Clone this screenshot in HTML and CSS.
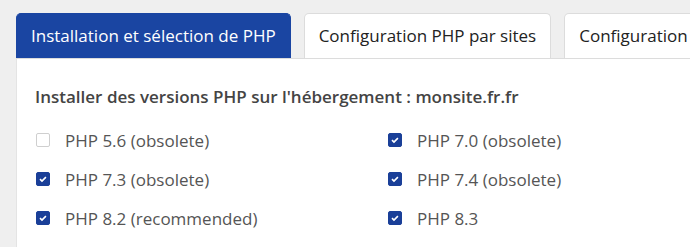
FILE: index.html
```html
<!DOCTYPE html>
<html lang="fr">
<head>
    <meta charset="UTF-8">
    <meta name="viewport" content="width=device-width, initial-scale=1.0">
    <title>PHP</title>
    <link rel="stylesheet" href="styles.css">
</head>
<body>
    <nav class="tabs">
        <div class="tab active">Installation et sélection de PHP</div>
        <div class="tab">Configuration PHP par sites</div>
        <div class="tab">Configuration</div>
    </nav>

    <section class="panel">
        <h2>Installer des versions PHP sur l'hébergement : monsite.fr.fr</h2>
        <div class="versions">
            <label class="version"><span class="box"></span>PHP 5.6 (obsolete)</label>
            <label class="version"><span class="box checked"></span>PHP 7.0 (obsolete)</label>
            <label class="version"><span class="box checked"></span>PHP 7.3 (obsolete)</label>
            <label class="version"><span class="box checked"></span>PHP 7.4 (obsolete)</label>
            <label class="version"><span class="box checked"></span>PHP 8.2 (recommended)</label>
            <label class="version"><span class="box checked"></span>PHP 8.3</label>
        </div>
    </section>
</body>
</html>
```

FILE: styles.css
```css
body {
    margin: 0;
    background-color: #efefef;
    font-family: 'Open Sans', sans-serif;
    color: #444;
    overflow: hidden;
}
.tabs {
    display: flex;
    gap: 13px;
    padding: 13px 0 0 16px;
    white-space: nowrap;
}
.tab {
    flex-shrink: 0;
    height: 45px;
    box-sizing: border-box;
    padding: 0 14px;
    line-height: 44px;
    font-size: 17px;
    color: #222;
    background-color: white;
    border: 1px solid #dcdcdc;
    border-bottom: none;
    border-radius: 5px 5px 0 0;
}
.tab.active {
    background-color: #1a45a2;
    border-color: #1a45a2;
    color: white;
}
.panel {
    margin-left: 16px;
    background-color: white;
    border-top: 1px solid #dcdcdc;
    border-left: 1px solid #e4e4e4;
    padding: 26px 0 17px 18px;
}
.panel h2 {
    margin: 0 0 20px;
    font-size: 17px;
    line-height: 23px;
    font-weight: 600;
    color: #444;
}
.versions {
    display: grid;
    grid-template-columns: 352px 1fr;
    row-gap: 15px;
}
.version {
    display: flex;
    align-items: center;
    height: 24px;
    font-size: 17px;
    color: #555;
}
.box {
    width: 14px;
    height: 14px;
    box-sizing: border-box;
    margin: 0 15px 0 1px;
    border: 1px solid #cfcfcf;
    border-radius: 2px;
    background-color: white;
}
.box.checked {
    border-color: #1a3f98;
    background-color: #1a3f98;
    background-image: url("data:image/svg+xml,%3Csvg xmlns='http://www.w3.org/2000/svg' viewBox='0 0 14 14'%3E%3Cpath d='M3.5 7.2l2.3 2.2 4.6-4.6' fill='none' stroke='white' stroke-width='1.9'/%3E%3C/svg%3E");
}
```
